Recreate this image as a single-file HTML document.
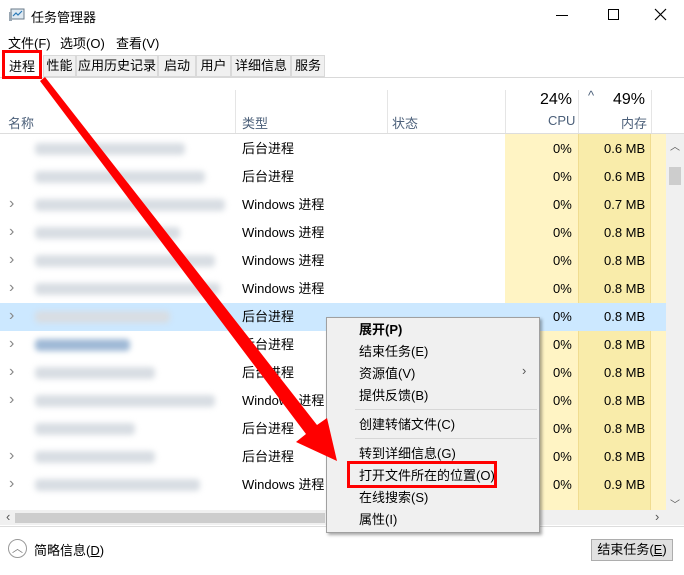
<!DOCTYPE html>
<html><head><meta charset="utf-8"><style>
*{margin:0;padding:0;box-sizing:border-box}
body{width:684px;height:575px;overflow:hidden;background:#fff;font-family:"Liberation Sans","Noto Sans CJK SC",sans-serif;font-size:13px;color:#000;position:relative}
.a{position:absolute;white-space:nowrap}
.tab{position:absolute;top:55px;height:22px;background:#f0f0f0;border:1px solid #d9d9d9;line-height:20px;text-align:center}
.blur{position:absolute;height:12px;background:#d8dde3;filter:blur(3px);border-radius:4px}
.mi{position:absolute;left:359px}
</style></head><body>
<svg class="a" style="left:9px;top:8px" width="16" height="14"><rect x="2" y="1" width="13" height="10" fill="#dfe9f2" stroke="#6a7a88"/><polyline points="4,8 7,5 9,7 13,3" fill="none" stroke="#2a7ab8" stroke-width="1.2"/><rect x="0" y="4" width="3" height="9" fill="#9aa7b3"/></svg>
<div class="a" style="left:31px;top:7px">任务管理器</div>
<div class="a" style="left:556px;top:15px;width:12px;border-top:1px solid #000"></div>
<div class="a" style="left:608px;top:9px;width:11px;height:11px;border:1px solid #000"></div>
<svg class="a" style="left:654px;top:8px" width="13" height="13"><path d="M1 1L12 12M12 1L1 12" stroke="#000" stroke-width="1.2"/></svg>
<div class="a" style="left:8px;top:33px">文件(F)</div>
<div class="a" style="left:60px;top:33px">选项(O)</div>
<div class="a" style="left:116px;top:33px">查看(V)</div>
<div class="a" style="left:0;top:77px;width:684px;border-top:1px solid #d9d9d9"></div>
<div class="tab" style="left:43px;width:33px">性能</div>
<div class="tab" style="left:76px;width:82px">应用历史记录</div>
<div class="tab" style="left:158px;width:38px">启动</div>
<div class="tab" style="left:196px;width:35px">用户</div>
<div class="tab" style="left:231px;width:60px">详细信息</div>
<div class="tab" style="left:291px;width:34px">服务</div>
<div class="a" style="left:4px;top:52px;width:38px;height:26px;background:#fff"></div>
<div class="a" style="left:9px;top:56px">进程</div>
<div class="a" style="left:2px;top:50px;width:40px;height:29px;border:3px solid #f00"></div>
<div class="a" style="left:235px;top:90px;height:43px;border-left:1px solid #e5e5e5"></div>
<div class="a" style="left:387px;top:90px;height:43px;border-left:1px solid #e5e5e5"></div>
<div class="a" style="left:505px;top:90px;height:43px;border-left:1px solid #e5e5e5"></div>
<div class="a" style="left:578px;top:90px;height:43px;border-left:1px solid #e5e5e5"></div>
<div class="a" style="left:651px;top:90px;height:43px;border-left:1px solid #e5e5e5"></div>
<div class="a" style="left:0;top:133px;width:684px;border-top:1px solid #ddd"></div>
<div class="a" style="left:8px;top:113px;color:#4c607a">名称</div>
<div class="a" style="left:242px;top:113px;color:#4c607a">类型</div>
<div class="a" style="left:392px;top:113px;color:#4c607a">状态</div>
<div class="a" style="left:540px;top:91px;font-size:16px">24%</div>
<div class="a" style="left:548px;top:113px;color:#4c607a">CPU</div>
<div class="a" style="left:588px;top:88px;color:#4c607a">^</div>
<div class="a" style="left:613px;top:91px;font-size:16px">49%</div>
<div class="a" style="left:621px;top:113px;color:#4c607a">内存</div>
<div class="a" style="left:505px;top:134px;width:73px;height:376px;background:#fff4c4"></div>
<div class="a" style="left:578px;top:134px;width:73px;height:376px;background:#f9ecaa;border-left:1px solid #f0dc90;border-right:1px solid #f0dc90"></div>
<div class="a" style="left:651px;top:134px;width:15px;height:376px;background:#fff4c4"></div>
<div class="a" style="left:0;top:303px;width:666px;height:28px;background:#cce8ff"></div>
<div class="blur" style="left:35px;top:143px;width:150px"></div>
<div class="blur" style="left:35px;top:171px;width:170px"></div>
<div class="blur" style="left:35px;top:199px;width:190px"></div>
<div class="blur" style="left:35px;top:227px;width:145px"></div>
<div class="blur" style="left:35px;top:255px;width:180px"></div>
<div class="blur" style="left:35px;top:283px;width:185px"></div>
<div class="blur" style="left:35px;top:311px;width:135px"></div>
<div class="blur" style="left:35px;top:339px;width:95px;background:#9fb9d6"></div>
<div class="blur" style="left:35px;top:367px;width:120px"></div>
<div class="blur" style="left:35px;top:395px;width:180px"></div>
<div class="blur" style="left:35px;top:423px;width:100px"></div>
<div class="blur" style="left:35px;top:451px;width:120px"></div>
<div class="blur" style="left:35px;top:479px;width:165px"></div>
<div style="position:absolute;left:9px;top:-2px;color:#888;font-size:16px;line-height:28px">
<div class="a" style="top:192px">›</div><div class="a" style="top:220px">›</div><div class="a" style="top:248px">›</div><div class="a" style="top:276px">›</div><div class="a" style="top:304px">›</div><div class="a" style="top:332px">›</div><div class="a" style="top:360px">›</div><div class="a" style="top:388px">›</div><div class="a" style="top:444px">›</div><div class="a" style="top:472px">›</div>
</div>
<div style="position:absolute;left:242px;top:-1px;line-height:28px">
<div class="a" style="top:136px">后台进程</div><div class="a" style="top:164px">后台进程</div><div class="a" style="top:192px">Windows 进程</div><div class="a" style="top:220px">Windows 进程</div><div class="a" style="top:248px">Windows 进程</div><div class="a" style="top:276px">Windows 进程</div><div class="a" style="top:304px">后台进程</div><div class="a" style="top:332px">后台进程</div><div class="a" style="top:360px">后台进程</div><div class="a" style="top:388px">Windows 进程</div><div class="a" style="top:416px">后台进程</div><div class="a" style="top:444px">后台进程</div><div class="a" style="top:472px">Windows 进程</div>
</div>
<div style="position:absolute;left:553px;top:-1px;line-height:28px">
<div class="a" style="top:136px">0%</div><div class="a" style="top:164px">0%</div><div class="a" style="top:192px">0%</div><div class="a" style="top:220px">0%</div><div class="a" style="top:248px">0%</div><div class="a" style="top:276px">0%</div><div class="a" style="top:304px">0%</div><div class="a" style="top:332px">0%</div><div class="a" style="top:360px">0%</div><div class="a" style="top:388px">0%</div><div class="a" style="top:416px">0%</div><div class="a" style="top:444px">0%</div><div class="a" style="top:472px">0%</div>
</div>
<div style="position:absolute;left:604px;top:-1px;line-height:28px">
<div class="a" style="top:136px">0.6 MB</div><div class="a" style="top:164px">0.6 MB</div><div class="a" style="top:192px">0.7 MB</div><div class="a" style="top:220px">0.8 MB</div><div class="a" style="top:248px">0.8 MB</div><div class="a" style="top:276px">0.8 MB</div><div class="a" style="top:304px">0.8 MB</div><div class="a" style="top:332px">0.8 MB</div><div class="a" style="top:360px">0.8 MB</div><div class="a" style="top:388px">0.8 MB</div><div class="a" style="top:416px">0.8 MB</div><div class="a" style="top:444px">0.8 MB</div><div class="a" style="top:472px">0.9 MB</div>
</div>
<div class="a" style="left:666px;top:134px;width:18px;height:376px;background:#f0f0f0"></div>
<div class="a" style="left:669px;top:167px;width:12px;height:18px;background:#cdcdcd"></div>
<div class="a" style="left:670px;top:138px;font-size:10px;color:#555">︿</div>
<div class="a" style="left:670px;top:496px;font-size:10px;color:#555">﹀</div>
<div class="a" style="left:0;top:510px;width:666px;height:15px;background:#f0f0f0"></div>
<div class="a" style="left:15px;top:513px;width:310px;height:10px;background:#cdcdcd"></div>
<div class="a" style="left:6px;top:509px;color:#555">‹</div>
<div class="a" style="left:655px;top:509px;color:#555">›</div>
<div class="a" style="left:666px;top:510px;width:18px;height:15px;background:#f0f0f0"></div>
<div class="a" style="left:0;top:526px;width:684px;border-top:1px solid #ddd"></div>
<div class="a" style="left:8px;top:539px;width:19px;height:19px;border:1px solid #999;border-radius:50%;color:#777;font-size:11px;text-align:center;line-height:18px">︿</div>
<div class="a" style="left:34px;top:540px">简略信息(<u>D</u>)</div>
<div class="a" style="left:591px;top:539px;width:82px;height:22px;background:#e1e1e1;border:1px solid #adadad;text-align:center;line-height:20px">结束任务(<u>E</u>)</div>
<div class="a" style="left:326px;top:317px;width:214px;height:216px;background:#f0f0f0;border:1px solid #a0a0a0;box-shadow:2px 2px 3px rgba(0,0,0,.35)"></div>
<div class="mi" style="top:319px;font-weight:bold">展开(P)</div>
<div class="mi" style="top:341px">结束任务(E)</div>
<div class="mi" style="top:363px">资源值(V)</div>
<div class="a" style="left:522px;top:363px;color:#555">›</div>
<div class="mi" style="top:385px">提供反馈(B)</div>
<div class="a" style="left:355px;top:409px;width:182px;border-top:1px solid #d7d7d7"></div>
<div class="mi" style="top:414px">创建转储文件(C)</div>
<div class="a" style="left:355px;top:438px;width:182px;border-top:1px solid #d7d7d7"></div>
<div class="mi" style="top:443px">转到详细信息(G)</div>
<div class="mi" style="top:465px">打开文件所在的位置(O)</div>
<div class="a" style="left:347px;top:461px;width:150px;height:27px;border:3px solid #f00"></div>
<div class="mi" style="top:487px">在线搜索(S)</div>
<div class="mi" style="top:509px">属性(I)</div>
<svg class="a" style="left:0;top:0" width="684" height="575"><polygon points="40,81 45,77 317,425 327,418 337,461 296,442 306,434" fill="#f00"/></svg>
</body></html>
